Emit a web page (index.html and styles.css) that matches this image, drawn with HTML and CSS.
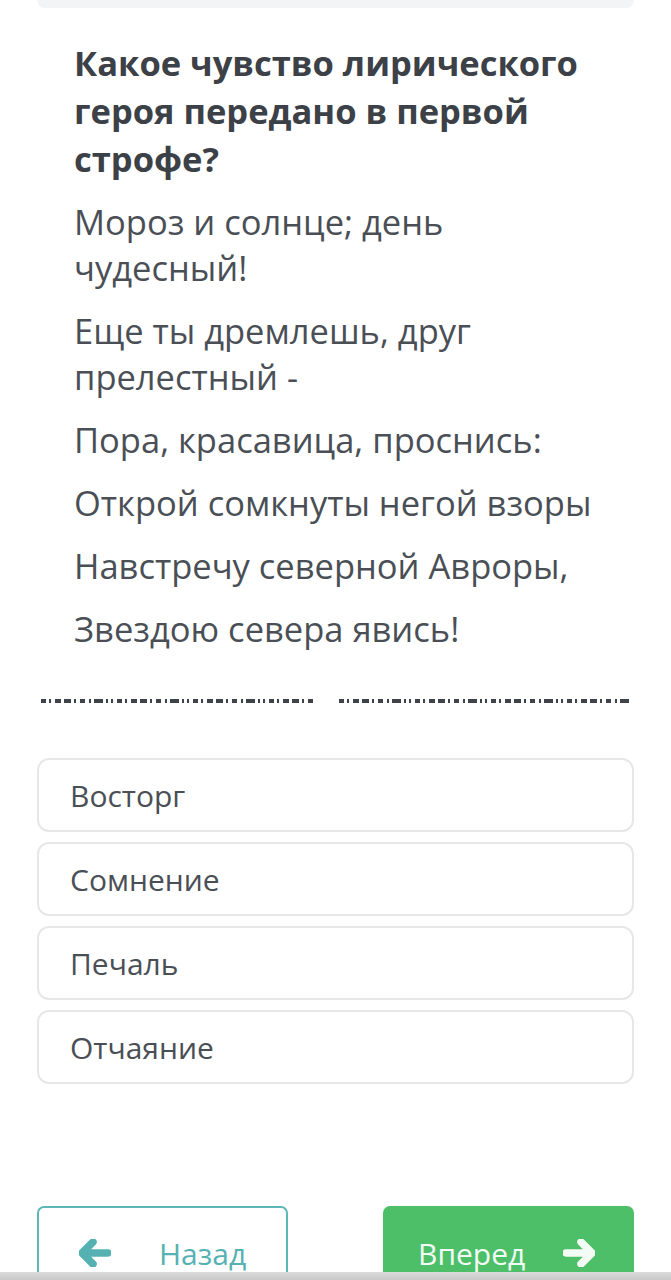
FILE: index.html
```html
<!DOCTYPE html>
<html lang="ru">
<head>
    <meta charset="UTF-8">
    <meta name="viewport" content="width=device-width, initial-scale=1.0">
    <title>Вопрос</title>
    <link rel="stylesheet" href="styles.css">
</head>
<body>
    <div class="container">
        <div class="top-card"></div>

        <div class="question">
            <h2>Какое чувство лирического героя передано в первой строфе?</h2>
            <p>Мороз и солнце; день чудесный!</p>
            <p>Еще ты дремлешь, друг прелестный -</p>
            <p>Пора, красавица, проснись:</p>
            <p>Открой сомкнуты негой взоры</p>
            <p>Навстречу северной Авроры,</p>
            <p>Звездою севера явись!</p>
        </div>

        <div class="cut-line">
            <span class="cut first"></span>
            <span class="cut second"></span>
        </div>

        <div class="answers">
            <div class="answer">Восторг</div>
            <div class="answer">Сомнение</div>
            <div class="answer">Печаль</div>
            <div class="answer">Отчаяние</div>
        </div>

        <div class="nav">
            <button class="nav-btn back">
                <svg width="32" height="28" viewBox="0 0 32 28"><path d="M14 3 L3 14 L14 25 M4 14 H29" fill="none" stroke="currentColor" stroke-width="7.5" stroke-linecap="round" stroke-linejoin="round"/></svg>
                <span>Назад</span>
            </button>
            <button class="nav-btn next">
                <span>Вперед</span>
                <svg width="32" height="28" viewBox="0 0 32 28"><path d="M18 3 L29 14 L18 25 M28 14 H3" fill="none" stroke="currentColor" stroke-width="7.5" stroke-linecap="round" stroke-linejoin="round"/></svg>
            </button>
        </div>
    </div>
    <div class="bottom-shade"></div>
</body>
</html>
```

FILE: styles.css
```css
body {
    margin: 0;
    background: #fff;
    font-family: 'Open Sans', 'Noto Sans', sans-serif;
    color: #4a4f56;
}
.container {
    padding: 0 37px;
}
.top-card {
    height: 8px;
    background: #f3f4f6;
    border-radius: 0 0 12px 12px;
}
.question {
    padding: 31px 37px 0;
}
.question h2 {
    margin: 0 0 16px;
    font-size: 34.5px;
    line-height: 48px;
    font-weight: 700;
    color: #3c4047;
}
.question p {
    margin: 0 0 17px;
    font-size: 34.5px;
    line-height: 46px;
}
.cut-line {
    display: flex;
    gap: 22px;
    padding: 30px 4px 0;
}
.cut {
    height: 4px;
    background: repeating-linear-gradient(90deg,
        #3e434a 0 5px, transparent 5px 8px,
        #3e434a 8px 10px, transparent 10px 14px,
        #3e434a 14px 20px, transparent 20px 23px,
        #3e434a 23px 30px, transparent 30px 33px,
        #3e434a 33px 35px, transparent 35px 39px,
        #3e434a 39px 44px, transparent 44px 48px,
        #3e434a 48px 50px, transparent 50px 53px,
        #3e434a 53px 62px, transparent 62px 65px,
        #3e434a 65px 67px, transparent 67px 70px,
        #3e434a 70px 72px, transparent 72px 76px);
}
.cut.first {
    width: 276px;
}
.cut.second {
    width: 290px;
}
.answers {
    display: flex;
    flex-direction: column;
    gap: 10px;
    margin-top: 55px;
}
.answer {
    height: 70px;
    display: flex;
    align-items: center;
    padding-left: 31px;
    border: 2px solid #e6e7e9;
    border-radius: 12px;
    font-size: 30px;
    color: #4a4f56;
}
.nav {
    display: flex;
    justify-content: space-between;
    margin-top: 122px;
}
.nav-btn {
    width: 251px;
    height: 94px;
    display: flex;
    align-items: center;
    border-radius: 7px;
    font-family: inherit;
    font-size: 30px;
    padding: 0;
}
.nav-btn.back {
    background: #fff;
    border: 2px solid #5cb8b6;
    color: #56b2b2;
    padding-left: 40px;
    gap: 48px;
}
.nav-btn.next {
    background: #4dbf69;
    border: 2px solid #4dbf69;
    color: #f2fbf4;
    padding-left: 33px;
    gap: 38px;
}
.bottom-shade {
    position: fixed;
    left: 0;
    right: 0;
    bottom: 0;
    height: 8px;
    background: linear-gradient(#dcdcdc, #c8c8c8);
}
```
